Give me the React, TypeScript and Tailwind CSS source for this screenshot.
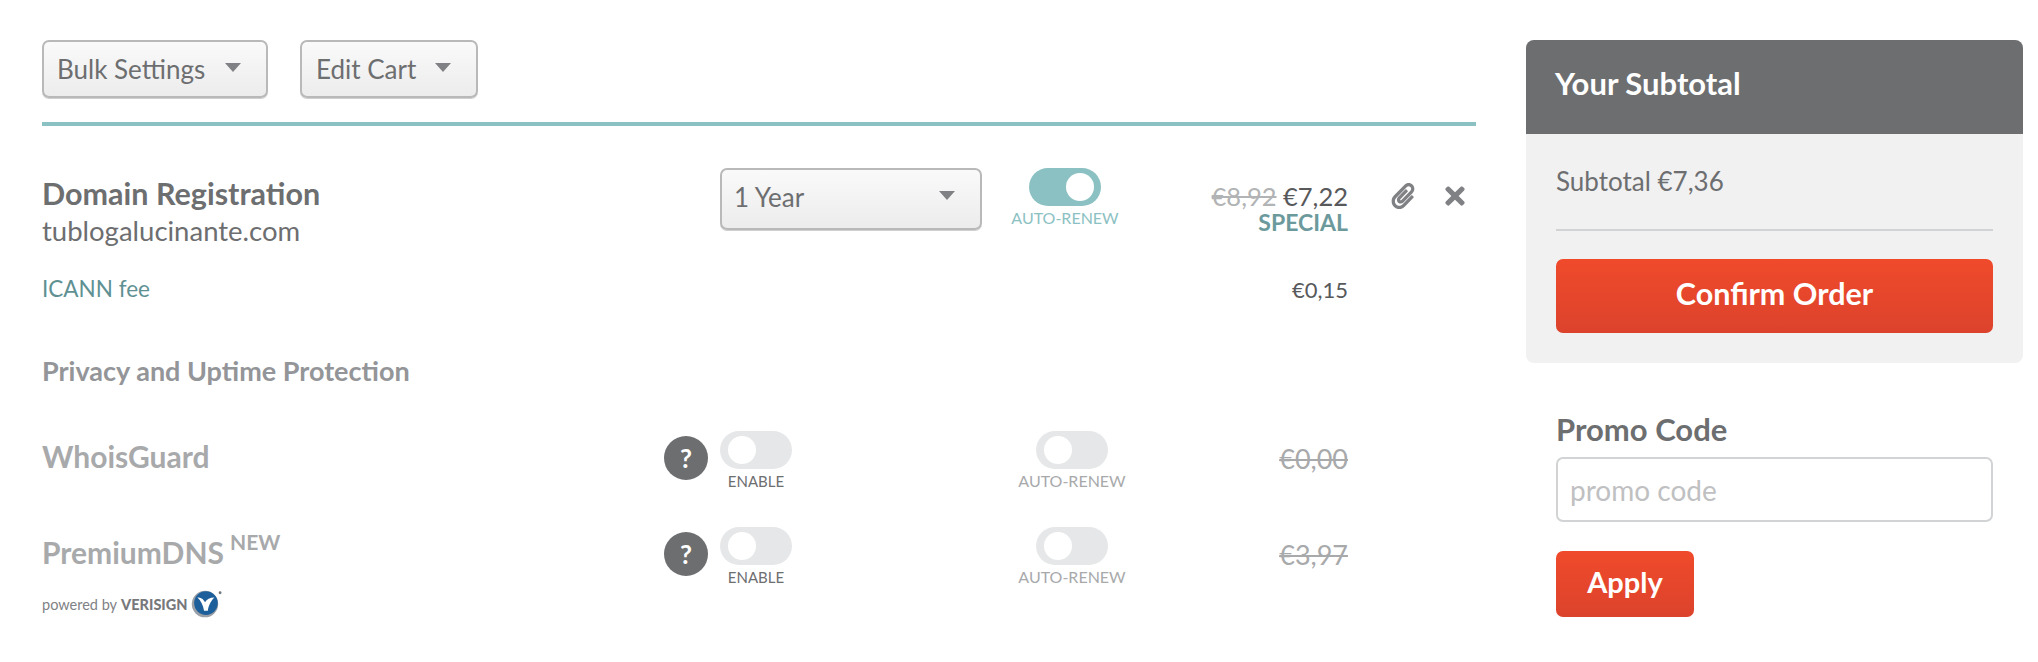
import { FaPaperclip, FaTimes } from 'react-icons/fa'

function Caret() {
  return <span className="mb-[4px] h-0 w-0 border-x-[8px] border-t-[9px] border-x-transparent border-t-[#808184]" />
}

function Dropdown({ label, className }: { label: string; className: string }) {
  return (
    <div className={`flex items-center justify-between rounded-[7px] border-2 border-[#b9b9b9] bg-gradient-to-b from-[#fafafa] to-[#ececec] text-[26px] text-[#6d6e70] shadow-[0_1px_0_#cfcfcf] ${className}`}>
      <span>{label}</span>
      <Caret />
    </div>
  )
}

function Toggle({ on }: { on?: boolean }) {
  return (
    <div className={`flex h-[38px] w-[72px] items-center rounded-full ${on ? 'justify-end bg-[#8cc1c3] pr-[7px]' : 'bg-[#e6e7e8] pl-[8px]'}`}>
      <span className="h-[28px] w-[28px] rounded-full bg-white" />
    </div>
  )
}

function Help() {
  return (
    <div className="mt-[5px] flex h-[44px] w-[44px] items-center justify-center rounded-full bg-[#6d6e70] text-[26px] font-bold text-white">?</div>
  )
}

function OptionRow({ name, price, sup, logo }: { name: string; price: string; sup?: boolean; logo?: boolean }) {
  return (
    <div className="flex h-[96px] items-start">
      <div className="w-[622px]">
        <div className="flex h-[50px] items-center text-[30px] font-bold leading-[50px] text-[#a8a9ab]">
          {name}
          {sup && <span className="mb-[20px] ml-[6px] text-[21px] font-bold">NEW</span>}
        </div>
        {logo && <Verisign />}
      </div>
      <Help />
      <div className="ml-[12px] flex w-[72px] flex-col items-center">
        <Toggle />
        <span className="mt-[2px] text-[15px] leading-[20px] text-[#6d6e70]">ENABLE</span>
      </div>
      <div className="ml-[244px] flex w-[72px] flex-col items-center">
        <Toggle />
        <span className="mt-[2px] whitespace-nowrap text-[16px] leading-[20px] text-[#a8a9ab]">AUTO-RENEW</span>
      </div>
      <div className="flex h-[57px] w-[240px] items-center justify-end text-[27px] text-[#a8a9ab] line-through">{price}</div>
    </div>
  )
}

function Verisign() {
  return (
    <div className="mt-[12px] flex h-[32px] items-center whitespace-nowrap text-[14.5px] text-[#808184]">
      <span>powered by</span>
      <span className="ml-[4px] font-black text-[#77787b]">VERISIGN</span>
      <svg viewBox="0 0 36 36" className="-ml-[1px] h-[34px] w-[38px]">
        <circle cx="18" cy="17" r="14" fill="#9aa0a6" />
        <circle cx="19" cy="16" r="12.5" fill="#1d5f9b" />
        <path d="M10 10c3 0 6 1 8 5 2-3 5-5 10-5-3 3-6 7-7 14h-4c-1-6-3-10-7-14z" fill="#fff" />
        <circle cx="34" cy="5" r="1.5" fill="#77787b" />
      </svg>
    </div>
  )
}

export default function App() {
  return (
    <div className="flex min-h-[662px] gap-[50px] bg-white pl-[42px] pt-[40px] font-[Lato,sans-serif]">
      {/* Cart */}
      <div className="w-[1434px]">
        <div className="flex gap-[32px]">
          <Dropdown label="Bulk Settings" className="h-[58px] w-[226px] pl-[13px] pr-[25px]" />
          <Dropdown label="Edit Cart" className="h-[58px] w-[178px] pl-[14px] pr-[25px]" />
        </div>
        <div className="mt-[24px] h-[4px] bg-[#8cc1c3]" />

        <div className="mt-[42px] flex items-start">
          <div className="w-[678px] pt-[7px]">
            <div className="text-[30.5px] font-bold leading-[36px] text-[#6d6e70]">Domain Registration</div>
            <div className="mt-[2px] text-[27.5px] leading-[36px] text-[#6d6e70]">tublogalucinante.com</div>
          </div>
          <Dropdown label="1 Year" className="h-[62px] w-[262px] pb-[4px] pl-[12px] pr-[25px]" />
          <div className="ml-[47px] flex w-[72px] flex-col items-center">
            <Toggle on />
            <span className="mt-[2px] whitespace-nowrap text-[16px] leading-[20px] text-[#8cc1c3]">AUTO-RENEW</span>
          </div>
          <div className="w-[247px] pt-[12px] text-right">
            <div className="text-[25.5px] leading-[32px] text-[#58595b]">
              <span className="text-[#b1b3b4] line-through">€8,92</span> €7,22
            </div>
            <div className="text-[23px] font-bold leading-[20px] text-[#6c9a9c]">SPECIAL</div>
          </div>
          <div className="ml-[42px] flex items-center gap-[25px] pt-[14px] text-[#808184]">
            <FaPaperclip className="h-[26px] w-[26px]" />
            <FaTimes className="h-[28px] w-[28px]" />
          </div>
        </div>

        <div className="mt-[22px] flex h-[36px] items-center">
          <span className="w-[1306px] text-[22.5px] leading-[36px] text-[#5f9193]">ICANN fee</span>
          <span className="-ml-[60px] w-[60px] text-right text-[22px] text-[#58595b]">€0,15</span>
        </div>

        <div className="mt-[46px] text-[27px] font-bold leading-[36px] text-[#939598]">Privacy and Uptime Protection</div>

        <div className="mt-[42px]">
          <OptionRow name="WhoisGuard" price="€0,00" />
          <OptionRow name="PremiumDNS" price="€3,97" sup logo />
        </div>
      </div>

      {/* Sidebar */}
      <div className="w-[497px]">
        <div className="overflow-hidden rounded-[8px] bg-[#f1f1f2]">
          <div className="flex h-[94px] items-center bg-[#6d6e70] pb-[8px] pl-[29px] text-[31px] font-bold text-white">Your Subtotal</div>
          <div className="px-[30px]">
            <div className="flex h-[97px] items-center border-b-2 border-[#d1d3d4] text-[26px] text-[#6d6e70]">Subtotal €7,36</div>
            <button className="mb-[30px] mt-[28px] flex h-[74px] w-full items-center justify-center rounded-[7px] bg-gradient-to-b from-[#f04a2b] to-[#dc432c] pb-[4px] text-[30.5px] font-bold text-white">Confirm Order</button>
          </div>
        </div>
        <div className="px-[30px]">
          <div className="mt-[48px] text-[31px] font-bold leading-[36px] text-[#6d6e70]">Promo Code</div>
          <input
            placeholder="promo code"
            className="mt-[10px] h-[65px] w-full rounded-[7px] border-2 border-[#d1d3d4] bg-white pl-[12px] text-[28px] placeholder:text-[#bfc0c2]"
          />
          <button className="mt-[29px] flex h-[66px] w-[138px] items-center justify-center rounded-[7px] bg-gradient-to-b from-[#f04a2b] to-[#dc432c] pb-[5px] text-[29px] font-bold text-white">Apply</button>
        </div>
      </div>
    </div>
  )
}
